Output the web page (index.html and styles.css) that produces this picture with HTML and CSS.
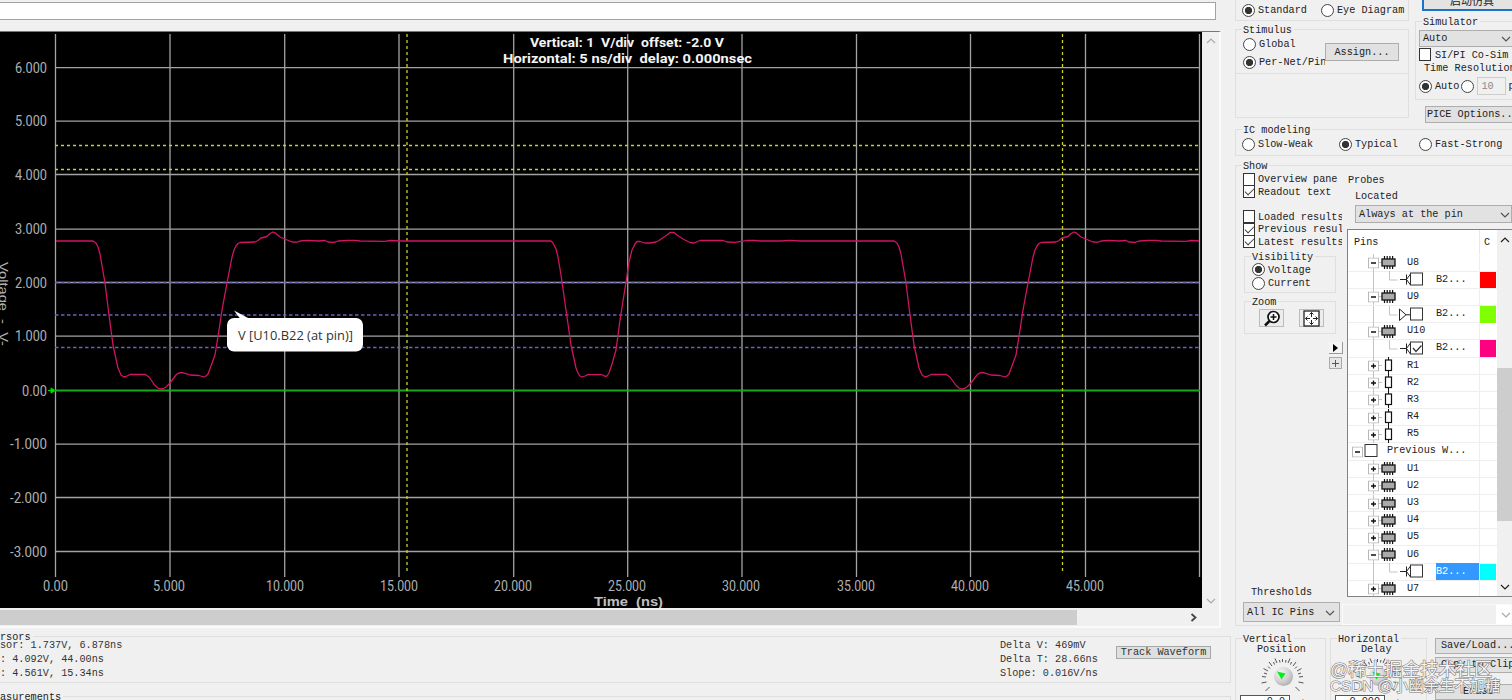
FILE: index.html
```html
<!DOCTYPE html>
<html lang="en">
<head>
<meta charset="utf-8">
<title>Digital Oscilloscope</title>
<link rel="stylesheet" href="styles.css">
</head>
<body>
<svg class="defs" width="0" height="0">
  <defs>
    <symbol id="plus" viewBox="0 0 11 11"><rect x=".5" y=".5" width="10" height="10" fill="#fff" stroke="#b8b8b8"/><path d="M3 5.5h5M5.500 3v5" stroke="#111" stroke-width="1.300"/></symbol>
    <symbol id="minus" viewBox="0 0 11 11"><rect x=".5" y=".5" width="10" height="10" fill="#fff" stroke="#b8b8b8"/><path d="M3 5.500h5" stroke="#111" stroke-width="1.300"/></symbol>
    <symbol id="chip" viewBox="0 0 15 15"><path d="M3.500 1v13M6.200 1v13M8.900 1v13M11.600 1v13" stroke="#111" stroke-width="1.200"/><rect x="1" y="4" width="13" height="7" fill="#aaa" stroke="#111" stroke-width="1.300"/></symbol>
    <symbol id="res" viewBox="0 0 15 17"><path d="M7.500 0v17" stroke="#111"/><rect x="4.500" y="3" width="6" height="10.500" fill="#fff" stroke="#111" stroke-width="1.200"/></symbol>
    <symbol id="row-chip-plus" viewBox="0 0 58 17"><path d="M25.500 0v17M31 8.500h3" stroke="#c4c4c4"/><use href="#plus" x="20" y="3.500" width="11" height="11"/><use href="#chip" x="33" y="1" width="15" height="15"/></symbol>
    <symbol id="row-chip-minus" viewBox="0 0 58 17"><path d="M25.500 0v17M31 8.500h3" stroke="#c4c4c4"/><use href="#minus" x="20" y="3.500" width="11" height="11"/><use href="#chip" x="33" y="1" width="15" height="15"/></symbol>
    <symbol id="row-res" viewBox="0 0 58 17"><path d="M25.500 0v17M31 8.500h3" stroke="#c4c4c4"/><use href="#plus" x="20" y="3.500" width="11" height="11"/><use href="#res" x="33" y="0" width="15" height="17"/></symbol>
    <symbol id="row-root" viewBox="0 0 38 17"><use href="#minus" x="4" y="3.500" width="11" height="11"/><rect x="17" y="1.500" width="12" height="12" fill="#fff" stroke="#333"/></symbol>
    <symbol id="row-in" viewBox="0 0 87 17"><path d="M25.500 0v17M41.500 0v9h8" fill="none" stroke="#c4c4c4"/><path d="M52 8.500h6.500M58.500 3.500v10M62.500 3l-4 5.500l4 5.500" fill="none" stroke="#222"/><rect x="62.500" y="2" width="12" height="12" fill="#fff" stroke="#333"/></symbol>
    <symbol id="row-in-on" viewBox="0 0 87 17"><use href="#row-in" width="87" height="17"/><path d="M65 8l3 3.500l5.500-6" fill="none" stroke="#333" stroke-width="1.200"/></symbol>
    <symbol id="row-out" viewBox="0 0 87 17"><path d="M25.500 0v17M41.500 0v9h8" fill="none" stroke="#c4c4c4"/><path d="M51.500 3v11.500l6.500-5.700zM58 8.800h5" fill="none" stroke="#222"/><rect x="62.500" y="2" width="12" height="12" fill="#fff" stroke="#333"/></symbol>
    <symbol id="chev" viewBox="0 0 10 6"><path d="M1 1l4 4l4-4" fill="none" stroke="currentColor" stroke-width="1.200"/></symbol>
    <symbol id="knob" viewBox="0 0 46 34"><path d="M9.500 29l-4 4M6.500 24l-5 1M6 19l-4-.5M8 13l-4.500-2.500M12 8l-3-4M17 5l-2-4.500M22.500 4v-3M28 5l2-4.500M33 8l3-4M37 13l4.500-2.500M39 19l4-.5M38.500 24l5 1M35.500 29l4 4M7 16l-3-1M10 10.500l-2-2M14.500 6.500l-1-2.500M20 4.500l-.5-2.500M25.500 4.500l.5-2.500M30.500 6.500l1-2.500M35 10.500l2-2M38 16l3-1" stroke="#444" stroke-width=".9"/><circle cx="23.500" cy="18.500" r="9.500" fill="url(#knobfill)"/><path d="M17 13.500l8.500 2l-4 6z" fill="#00f018"/></symbol>
    <radialGradient id="knobfill" cx=".35" cy=".3" r=".8"><stop offset="0" stop-color="#f4f4f4"/><stop offset=".6" stop-color="#cfcfcf"/><stop offset="1" stop-color="#a8a8a8"/></radialGradient>
  </defs>
</svg>
<div class="app">
  <main class="scope">
    <div class="titlefield"></div>
    <div class="viewer">
      <div class="viewrow">
        <svg class="plot" width="1202" height="576" viewBox="0 32 1202 576">
          <rect y="32" width="1202" height="576" fill="#000"/>
          <g class="grid">
            <path d="M55.500 34V577M170 34V577M284.700 34V577M399 34V577M513.700 34V577M627.700 34V577M742 34V577M856.500 34V577M970.500 34V577M1085.500 34V577M1199.500 34V577"/>
            <path d="M55 67.700H1200M55 121.200H1200M55 174.500H1200M55 229.200H1200M55 282.500H1200M55 336.200H1200M55 390.500H1200M55 444.200H1200M55 497.500H1200M55 551.500H1200"/>
          </g>
          <path class="zero" d="M55 390.500H1200"/>
          <path d="M48 390.500h5M51 388l4 2.500l-4 2.500z" stroke="#0d0" fill="#0d0"/>
          <path class="cursor" d="M55 145.500H1200M55 169.500H1200M407 34V571M1062.500 34V571"/>
          <path class="threshold" d="M55 282.500H1200M55 315H1200M55 347.500H1200"/>
          <polyline class="wave" points="56,241 93,241 96,243 98,247 100,254 105,283 109,315 113,345 118,368 121,375 124,377 126,376.500 130,374.500 145,374.300 149,377 155,385.500 158,388 160,389 163,388.700 166,387 170,383 176,375 178,373.300 181,372.500 185,373.300 190,375 199,375.500 204,377 206,376 208,374 211,366 215,355 219,330 222,310 227,283 232,257 234,250 236,246 238,243.500 240,242.500 255,242 258,240.500 261,238 267,236.500 270,233.500 273,232 275,232.800 280,237 286,239.500 292,242 297,242.200 300,241 308,240.300 318,241 325,240.500 328,242 334,242.300 338,241 348,240.300 355,240.300 360,241 385,241.300 390,240.500 400,241 551,241 553,243 556,249 558,257 561,275 566,310 571,345 576,368 578,373 580,376 582,377 585,376 588,374.700 602,374.700 605,376.300 607,376 609,373 612,364 616,350 620,320 626,282 629,262 632,250 635,244 637,241.500 640,241.500 645,243 650,243 656,242 659,240.500 664,237 667,235 670,232.500 674,232.500 677,235 683,239 690,242.500 694,243 700,240.500 723,240.500 727,242 735,242.300 741,241.300 748,240.300 755,240.500 760,241 780,241 790,240.300 800,241 894,241 897,243 899,247 901,254 906,283 910,315 914,345 919,368 922,375 925,377 927,376.500 931,374.500 946,374.300 950,377 956,385.500 959,388 961,389 964,388.700 967,387 971,383 977,375 979,373.300 982,372.500 986,373.300 991,375 1000,375.500 1005,377 1007,376 1009,374 1012,366 1016,355 1020,330 1023,310 1028,283 1033,257 1035,250 1037,246 1039,243.500 1041,242.500 1056,242 1059,240.500 1062,238 1068,236.500 1071,233.500 1074,232 1076,232.800 1081,237 1087,239.500 1093,242 1098,242.200 1101,241 1109,240.300 1119,241 1126,240.500 1129,242 1135,242.300 1139,241 1149,240.300 1156,240.300 1161,241 1186,241.300 1191,240.500 1199,241"/>
          <g class="axis">
            <text x="15" y="72.500" textLength="32" lengthAdjust="spacingAndGlyphs">6.000</text><text x="15" y="126" textLength="32" lengthAdjust="spacingAndGlyphs">5.000</text><text x="15" y="179.500" textLength="32" lengthAdjust="spacingAndGlyphs">4.000</text><text x="15" y="234" textLength="32" lengthAdjust="spacingAndGlyphs">3.000</text><text x="15" y="287.500" textLength="32" lengthAdjust="spacingAndGlyphs">2.000</text><text x="15" y="341" textLength="32" lengthAdjust="spacingAndGlyphs">1.000</text><text x="22" y="395.500" textLength="25" lengthAdjust="spacingAndGlyphs">0.00</text><text x="10" y="449" textLength="37" lengthAdjust="spacingAndGlyphs">-1.000</text><text x="10" y="502.500" textLength="37" lengthAdjust="spacingAndGlyphs">-2.000</text><text x="10" y="556.500" textLength="37" lengthAdjust="spacingAndGlyphs">-3.000</text>
            <text x="43" y="591.300" textLength="25" lengthAdjust="spacingAndGlyphs">0.00</text><text x="153" y="591.300" textLength="32" lengthAdjust="spacingAndGlyphs">5.000</text><text x="266" y="591.300" textLength="38" lengthAdjust="spacingAndGlyphs">10.000</text><text x="380" y="591.300" textLength="38" lengthAdjust="spacingAndGlyphs">15.000</text><text x="494" y="591.300" textLength="38" lengthAdjust="spacingAndGlyphs">20.000</text><text x="608" y="591.300" textLength="38" lengthAdjust="spacingAndGlyphs">25.000</text><text x="722" y="591.300" textLength="38" lengthAdjust="spacingAndGlyphs">30.000</text><text x="837" y="591.300" textLength="38" lengthAdjust="spacingAndGlyphs">35.000</text><text x="951" y="591.300" textLength="38" lengthAdjust="spacingAndGlyphs">40.000</text><text x="1066" y="591.300" textLength="38" lengthAdjust="spacingAndGlyphs">45.000</text>
          </g>
          <text class="title" x="594" y="606" textLength="69" lengthAdjust="spacingAndGlyphs">Time  (ns)</text>
          <text class="vtitle" transform="translate(-1 262) rotate(90)" textLength="84" lengthAdjust="spacingAndGlyphs">Voltage  -  V-</text>
          <text class="readout" x="530" y="47" textLength="194" lengthAdjust="spacingAndGlyphs">Vertical: 1  V/div  offset: -2.0 V</text>
          <text class="readout" x="503" y="63" textLength="249" lengthAdjust="spacingAndGlyphs">Horizontal: 5 ns/div  delay: 0.000nsec</text>
          <rect x="227" y="318" width="136" height="33.500" rx="7" fill="#fff"/>
          <path d="M234 310.500l15 8h-9z" fill="#fff"/>
          <text class="tip" x="238" y="340" textLength="115" lengthAdjust="spacingAndGlyphs">V [U10.B22 (at pin)]</text>
        </svg>
        <div class="vscroll"><svg class="up" width="10" height="6"><use href="#chev"/></svg><svg width="10" height="6"><use href="#chev"/></svg></div>
      </div>
      <div class="hscroll"><div class="thumb"></div><svg width="7" height="9" viewBox="0 0 7 9"><path d="M1.500 1l4 3.500l-4 3.500" fill="none" stroke="#444" stroke-width="1.800"/></svg></div>
    </div>
    <section class="group cursors">
      <div class="legend">rsors</div>
      <div class="cursorrow">
        <div class="lines first"><div>sor: 1.737V, 6.878ns</div><div>: 4.092V, 44.00ns</div><div>: 4.561V, 15.34ns</div></div>
        <div class="lines"><div>Delta V: 469mV</div><div>Delta T: 28.66ns</div><div>Slope: 0.016V/ns</div></div>
        <button class="btn track">Track Waveform</button>
      </div>
    </section>
    <section class="group measure"><div class="legend">asurements</div></section>
  </main>

  <aside class="panel">
    <div class="top">
      <div class="topleft">
        <div class="mode"><label><i class="radio on"></i>Standard</label><label><i class="radio"></i>Eye Diagram</label></div>
        <section class="group stimulus">
          <div class="legend">Stimulus</div>
          <div class="stimrow">
            <div class="stimopts"><label><i class="radio"></i>Global</label><label><i class="radio on"></i>Per-Net/Pin</label></div>
            <button class="btn assign">Assign...</button>
          </div>
        </section>
        <div class="blank"></div>
      </div>
      <div class="topright">
        <button class="start"><span>启动仿真</span></button>
        <section class="group simulator">
          <div class="legend">Simulator</div>
          <div class="select simsel">Auto<svg width="10" height="6"><use href="#chev"/></svg></div>
          <label class="cosim"><i class="check"></i>SI/PI Co-Sim</label>
          <div class="timeres">Time Resolution</div>
          <div class="resrow"><i class="radio on"></i><span>Auto</span><i class="radio"></i><span class="num">10</span><span>ps</span></div>
        </section>
        <button class="btn spice">PICE Options...</button>
      </div>
    </div>
    <section class="group ic">
      <div class="legend">IC modeling</div>
      <div class="icrow"><label><i class="radio"></i>Slow-Weak</label><label><i class="radio on"></i>Typical</label><label><i class="radio"></i>Fast-Strong</label></div>
    </section>
    <section class="group show">
      <div class="legend">Show</div>
      <div class="showcols">
        <div class="showleft">
          <div class="checks">
            <label><i class="check"></i>Overview pane</label>
            <label><i class="check on"></i>Readout text</label>
            <label class="gap"><i class="check"></i>Loaded results</label>
            <label><i class="check on"></i>Previous results</label>
            <label><i class="check on"></i>Latest results</label>
          </div>
          <section class="group visibility">
            <div class="legend">Visibility</div>
            <label><i class="radio on"></i>Voltage</label>
            <label><i class="radio"></i>Current</label>
          </section>
          <section class="group zoom">
            <div class="legend">Zoom</div>
            <div class="zoomrow">
              <button class="tool"><svg width="18" height="17" viewBox="0 0 18 17"><circle cx="10.500" cy="7" r="5.500" fill="#fff" stroke="#111" stroke-width="1.700"/><path d="M10.500 4v6M7.500 7h6" stroke="#111" stroke-width="1.500"/><path d="M6.500 11L2 15.500" stroke="#111" stroke-width="2.500"/></svg></button>
              <button class="tool"><svg width="17" height="17" viewBox="0 0 17 17"><rect x="1" y="1" width="15" height="15" fill="#fff" stroke="#222" stroke-width="1.300"/><path d="M8.500 2.500v4.500M8.500 10v4.500M2.500 8.500H7M10 8.500h4.500M6.500 4.500l2-2l2 2M6.500 12.500l2 2l2-2M4.500 6.500l-2 2l2 2M12.500 6.500l2 2l-2 2" fill="none" stroke="#222"/></svg></button>
            </div>
          </section>
          <div class="mini"><button class="arrow"><svg width="5" height="8"><path d="M0 0l5 4l-5 4z"/></svg></button><button class="add"><svg width="7" height="7"><path d="M0 3.500h7M3.500 0v7" stroke="#555"/></svg></button></div>
          <div class="thresholds"><div>Thresholds</div><div class="select">All IC Pins<svg width="10" height="6"><use href="#chev"/></svg></div></div>
        </div>
        <div class="probes">
          <div class="h1">Probes</div>
          <div class="h2">Located</div>
          <div class="select located">Always at the pin<svg width="10" height="6"><use href="#chev"/></svg></div>
          <div class="tree">
            <div class="list">
              <div class="head"><span>Pins</span><b>C</b></div>
              <div class="row"><span><svg class="s"><use href="#row-chip-minus"/></svg>U8</span><b></b></div>
              <div class="row"><span><svg class="l"><use href="#row-in"/></svg>B2...</span><b class="red"></b></div>
              <div class="row"><span><svg class="s"><use href="#row-chip-minus"/></svg>U9</span><b></b></div>
              <div class="row"><span><svg class="l"><use href="#row-out"/></svg>B2...</span><b class="green"></b></div>
              <div class="row"><span><svg class="s"><use href="#row-chip-minus"/></svg>U10</span><b></b></div>
              <div class="row"><span><svg class="l"><use href="#row-in-on"/></svg>B2...</span><b class="pink"></b></div>
              <div class="row"><span><svg class="s"><use href="#row-res"/></svg>R1</span><b></b></div>
              <div class="row"><span><svg class="s"><use href="#row-res"/></svg>R2</span><b></b></div>
              <div class="row"><span><svg class="s"><use href="#row-res"/></svg>R3</span><b></b></div>
              <div class="row"><span><svg class="s"><use href="#row-res"/></svg>R4</span><b></b></div>
              <div class="row"><span><svg class="s"><use href="#row-res"/></svg>R5</span><b></b></div>
              <div class="row"><span><svg class="r"><use href="#row-root"/></svg>Previous W...</span><b></b></div>
              <div class="row"><span><svg class="s"><use href="#row-chip-plus"/></svg>U1</span><b></b></div>
              <div class="row"><span><svg class="s"><use href="#row-chip-plus"/></svg>U2</span><b></b></div>
              <div class="row"><span><svg class="s"><use href="#row-chip-plus"/></svg>U3</span><b></b></div>
              <div class="row"><span><svg class="s"><use href="#row-chip-plus"/></svg>U4</span><b></b></div>
              <div class="row"><span><svg class="s"><use href="#row-chip-plus"/></svg>U5</span><b></b></div>
              <div class="row"><span><svg class="s"><use href="#row-chip-minus"/></svg>U6</span><b></b></div>
              <div class="row"><span><svg class="l"><use href="#row-in"/></svg><em>B2...</em></span><b class="cyan"></b></div>
              <div class="row"><span><svg class="s"><use href="#row-chip-plus"/></svg>U7</span><b></b></div>
            </div>
            <div class="treescroll"><svg class="up" width="10" height="6"><use href="#chev"/></svg><div class="bar"></div><svg width="10" height="6"><use href="#chev"/></svg></div>
          </div>
          <div class="netsel"><span></span><div><svg width="10" height="6"><use href="#chev"/></svg></div></div>
        </div>
      </div>
    </section>
    <div class="controls">
      <section class="group knobbox vert"><div class="legend">Vertical</div><div class="sub">Position</div><svg class="knob" width="46" height="34"><use href="#knob"/></svg><div class="field"><span>0.0</span><i>▲</i></div></section>
      <section class="group knobbox horiz"><div class="legend">Horizontal</div><div class="sub">Delay</div><svg class="knob" width="46" height="34"><use href="#knob"/></svg><div class="field"><span>0.000</span><i>▲</i></div></section>
      <div class="actions"><button class="btn">Save/Load...</button><button class="btn">Copy to Clip</button><button class="btn erase">Erase</button></div>
    </div>
    <div class="mark"><div>@稀土掘金技术社区</div><div class="second">CSDN @小幽余生不加糖</div></div>
  </aside>
</div>
</body>
</html>
```
FILE: styles.css
```css
* { box-sizing: border-box; }
body { margin: 0; background: #f0f0f0; overflow: hidden; color: #222; font: 10.2px/12px "Liberation Mono", "Noto Sans CJK SC", monospace; }
.defs { display: block; position: absolute; }
.app { display: flex; width: 1512px; height: 700px; overflow: hidden; }
svg { display: block; flex: none; }
button { font: inherit; color: inherit; padding: 0; margin: 0; white-space: nowrap; }
label { display: flex; align-items: center; gap: 3px; padding-top: 2px; white-space: nowrap; }

/* Shared controls */
.group { border: 1px solid #dfdfdf; }
.legend { width: max-content; height: 11px; line-height: 13px; margin: -6px 0 0 6px; padding: 0 2px 0 1px; background: #f0f0f0; }
.radio { flex: none; width: 13px; height: 13px; margin-bottom: 2px; border: 1px solid #444; border-radius: 50%; background: #fff; }
.radio.on { background: radial-gradient(circle, #333 0 3.3px, #fff 4px); }
.check { flex: none; width: 12px; height: 13px; margin-bottom: 2px; border: 1px solid #333; background: #fff; }
.check.on::after { content: ""; display: block; width: 8px; height: 4px; margin: 2px 0 0 1px; border: solid #444; border-width: 0 0 1px 1px; transform: rotate(-45deg); }
.btn { border: 1px solid #adadad; background: #e1e1e1; }
.select { display: flex; align-items: center; justify-content: space-between; border: 1px solid #adadad; background: #e2e2e2; padding: 1px 4px 0 3px; white-space: nowrap; color: #222; }
.select svg { color: #555; }

/* Oscilloscope area */
.scope { flex: none; width: 1231px; overflow: hidden; }
.titlefield { width: 1216px; height: 18px; margin: 2px 0 11px; border: solid #a2a2a2; border-width: 1px 1px 1px 0; background: #fff; }
.viewer { width: 1221px; height: 597px; border-top: 1px solid #777; border-right: 2px solid #fafafa; border-bottom: 2px solid #fafafa; }
.viewrow { display: flex; height: 577px; }
.vscroll { display: flex; flex-direction: column; justify-content: space-between; align-items: center; width: 17px; padding: 6px 0 5px; color: #aaa; }
.up { transform: scaleY(-1); }
.hscroll { display: flex; align-items: center; height: 17px; padding-right: 22px; justify-content: space-between; }
.thumb { width: 1077px; height: 15px; background: #cdcdcd; }
.grid path { fill: none; stroke: #a3a3a3; stroke-width: 1.300; }
.zero { stroke: #18a51c; stroke-width: 1.300; }
.cursor { fill: none; stroke: #c9d02c; stroke-width: 1.300; stroke-dasharray: 3 3; }
.threshold { fill: none; stroke: #6662bd; stroke-width: 1.300; stroke-dasharray: 3.500 2.500; }
.wave { fill: none; stroke: #cf1461; stroke-width: 1.300; stroke-linejoin: round; }
.plot text { white-space: pre; font-family: Roboto, sans-serif; }
.axis text { font-size: 14.200px; fill: #b0b0b0; }
.plot .title { font: bold 12.500px "Liberation Sans", sans-serif; fill: #c0c0c0; }
.plot .vtitle { font: 13px "Liberation Sans", sans-serif; fill: #b0b0b0; }
.plot .readout { font: bold 13px Roboto, sans-serif; fill: #f4f4f4; }
.plot .tip { font: 12.500px "Open Sans", sans-serif; fill: #333; }

.cursors { height: 47px; margin: 8px 0 0; border-left: 0; }
.cursors > .legend, .measure > .legend { margin-left: 0; padding-left: 0; }
.cursorrow { display: flex; align-items: flex-start; color: #333; }
.lines { width: 116px; white-space: nowrap; line-height: 14px; margin-top: -3px; }
.lines.first { width: 1000px; }
.track { width: 95px; height: 13px; line-height: 11px; margin-top: 4px; border-color: #a5aaa7; background: #dde0de; }
.measure { height: 20px; margin-top: 13px; border-left: 0; }

/* Side panel */
.panel { position: relative; flex: none; width: 281px; padding-left: 4px; overflow: hidden; }
.top { display: grid; grid-template-columns: 174px 120px; gap: 6px; height: 123px; }
.mode { display: flex; height: 21px; padding-left: 6px; border: solid #dfdfdf; border-width: 0 1px 1px; }
.mode label:first-child { flex: 0 0 79px; }
.stimulus { height: 45px; margin-top: 8px; }
.stimrow { display: flex; }
.stimopts { width: 89px; padding-left: 7px; overflow: hidden; }
.stimopts label { height: 18px; }
.assign { width: 74px; height: 18px; margin-top: 8px; padding-top: 1px; }
.blank { height: 44px; border: solid #dfdfdf; border-width: 0 1px 1px; }
.start { display: flex; width: 120px; height: 11px; margin-left: 7px; padding: 0 0 3px 26px; border: solid #1b74c9; border-width: 0 2px 2px; background: #e3e3e3; overflow: hidden; align-items: flex-end; }
.start span { font: 11px/12px "Noto Sans CJK SC", sans-serif; }
.simulator { height: 79px; margin-top: 10px; }
.simsel { width: 97px; height: 17px; margin: 3px 0 0 3px; }
.cosim { height: 13px; margin: 1px 0 0 3px; gap: 4px; }
.timeres { height: 12px; line-height: 14px; margin: 1px 0 0 8px; white-space: nowrap; }
.resrow { display: flex; align-items: center; height: 18px; margin: 3px 0 0 3px; padding-top: 2px; gap: 2px; }
.resrow .radio + span { margin-left: 1px; }
.resrow .num { flex: none; width: 29px; height: 18px; padding: 3px 0 0 3px; margin: 0 0 2px; border: 1px solid #ccc; color: #888; }
.spice { width: 110px; height: 17px; margin: 6px 0 0 10px; text-align: left; padding-left: 1px; }
.ic { width: 290px; height: 27px; margin-top: 6px; }
.icrow { display: flex; padding-left: 6px; height: 18px; }
.icrow label { width: 80px; }
.icrow label:first-child { width: 97px; }
.show { width: 290px; height: 461px; margin-top: 9px; }
.showcols { display: grid; grid-template-columns: 111px 165px; height: 454px; }
.showleft { display: flex; flex-direction: column; padding-bottom: 3px; height: 454px; }
.checks { width: 106px; padding-left: 7px; margin-top: 2px; overflow: hidden; flex: none; }
.checks label { height: 12.500px; }
.checks .gap { margin-top: 12.500px; }
.visibility { width: 92px; height: 37px; margin: 8px 0 0 8px; flex: none; }
.visibility label { height: 13.500px; padding-left: 7px; }
.visibility label:nth-child(2) { margin-top: 1px; }
.zoom { width: 92px; height: 33px; margin: 8px 0 0 8px; flex: none; }
.zoomrow { display: flex; gap: 15px; padding: 2px 0 0 14px; }
.tool { display: flex; align-items: center; justify-content: center; width: 25px; height: 18px; border: 1px solid #bdbdbd; background: #ececec; }
.mini { display: flex; flex-direction: column; gap: 3px; margin: 8px 0 0 93px; align-items: flex-start; }
.mini button { display: flex; align-items: center; justify-content: center; height: 12px; }
.arrow { width: 14px; border: solid #999; border-width: 0 1px 1px 0; background: #f4f4f4; }
.add { width: 13px; border: 1px solid #aaa; background: #e6e6e6; }
.thresholds { margin: auto 0 0 7px; }
.thresholds > div:first-child { padding-left: 8px; height: 11px; }
.thresholds .select { width: 97px; height: 20px; margin-top: 4px; }
.probes { height: 454px; }
.h1 { margin: 4px 0 4px 1px; }
.h2 { margin: 0 0 2px 8px; }
.located { height: 18px; margin-left: 8px; padding-right: 1px; }
.tree { display: flex; height: 368px; margin-top: 6px; border: solid #828282; border-width: 1px 0 1px 1px; background: #fff; overflow: hidden; }
.list { width: 149px; height: 366px; overflow: hidden; }
.head { display: flex; height: 24.500px; align-items: center; padding-left: 6px; }
.head span { width: 125px; padding-top: 1px; }
.head b { width: 18px; height: 24px; padding-left: 4px; line-height: 25px; border-left: 1px solid #e8e8e8; font-weight: normal; }
.row { display: flex; height: 17.180px; border-bottom: 1px solid #eee; }
.row span { display: flex; align-items: center; width: 131px; padding-left: 1px; }
.row b { width: 17px; height: 16.500px; border-left: 1px solid #eee; }
.row svg { height: 17px; overflow: visible; margin-left: -1px; margin-right: 1px; }
.s { width: 58px; }
.l { width: 87px; }
.r { width: 38px; }
.row em { width: 43px; height: 16.500px; line-height: 17px; background: #3399ff; color: #fff; font-style: normal; }
.row .red { background: #f00; }
.row .green { background: #80ff00; }
.row .pink { background: #ff0080; }
.row .cyan { background: #0ff; }
.treescroll { display: flex; flex-direction: column; align-items: center; width: 15px; padding: 7px 0 6px; background: #f0f0f0; }
.bar { flex: none; width: 15px; height: 153px; margin: 125px 0 auto; background: #cdcdcd; }
.netsel { display: flex; height: 21px; margin: 7px 0 0 -5px; border: 1px solid #fafafa; }
.netsel span { width: 154px; }
.netsel div { display: flex; align-items: center; padding-left: 5px; background: #fff; color: #aaa; }

/* Vertical and horizontal adjustment */
.controls { display: flex; height: 62px; margin-top: 12px; }
.knobbox { display: flex; flex-direction: column; align-items: flex-start; height: 80px; flex: none; }
.vert { width: 91px; }
.horiz { width: 97px; margin-left: 4px; }
.sub { height: 11px; line-height: 11px; margin: 0 0 0 21px; }
.horiz .sub { margin-left: 30px; }
.knob { margin: 3px 0 0 24px; }
.field { display: flex; margin: 3px 0 0 4px; }
.field span { width: 50px; height: 18px; padding: 0 4px; border: 1px solid #555; background: #fff; text-align: right; }
.field i { width: 15px; font-size: 7px; text-align: right; font-style: normal; }
.actions { width: 100px; margin-left: 8px; flex: none; }
.actions .btn { display: block; width: 100px; height: 16px; margin-bottom: 3px; padding-left: 5px; text-align: left; }
.actions .erase { margin-top: 11px; padding-left: 27px; }
.mark { position: absolute; left: 99px; top: 661px; color: #f4f4f4; -webkit-text-stroke: 1.100px #777; paint-order: stroke fill; white-space: nowrap; font: 18px/19px "Liberation Sans", "Noto Sans CJK SC", sans-serif; }
.mark .second { font-size: 15.300px; line-height: 14px; margin-top: -1px; }
```
